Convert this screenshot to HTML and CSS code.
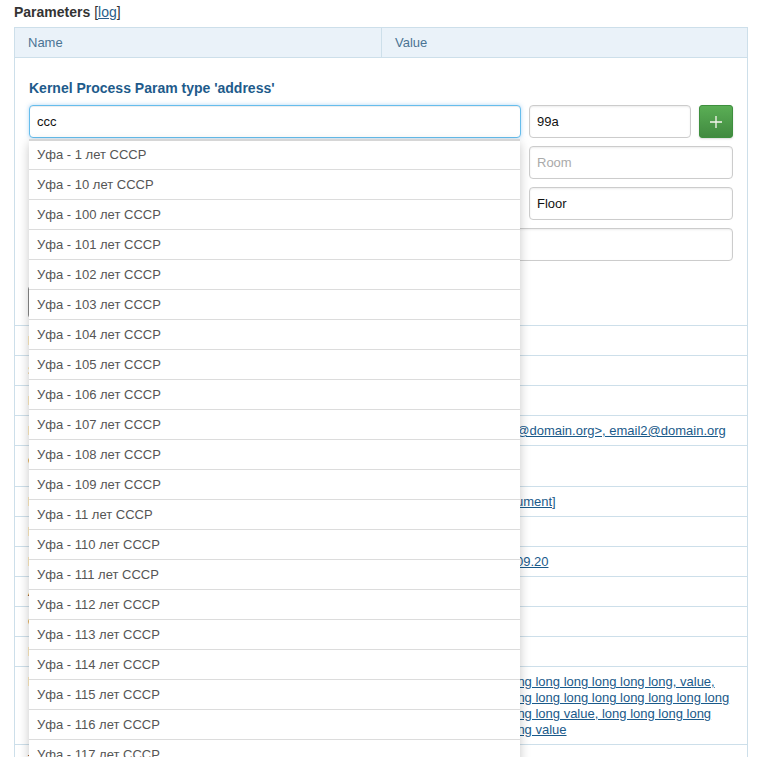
FILE: index.html
```html
<!DOCTYPE html>
<html lang="ru">
<head>
<meta charset="utf-8">
<title>Parameters</title>
<link rel="stylesheet" href="styles.css">
</head>
<body>
<div class="page">
  <div class="section-title">Parameters <span class="log">[<a href="#">log</a>]</span></div>

  <table class="params">
    <thead>
      <tr><th class="col-name">Name</th><th class="col-value">Value</th></tr>
    </thead>
    <tbody>
      <tr class="edit-row">
        <td colspan="2">
          <div class="edit-title">Kernel Process Param type 'address'</div>
          <div class="addr-form">
            <div class="combo">
              <input class="field focused" type="text" value="ccc">
              <ul class="suggest">
                <li>Уфа - 1 лет СССР</li>
                <li>Уфа - 10 лет СССР</li>
                <li>Уфа - 100 лет СССР</li>
                <li>Уфа - 101 лет СССР</li>
                <li>Уфа - 102 лет СССР</li>
                <li>Уфа - 103 лет СССР</li>
                <li>Уфа - 104 лет СССР</li>
                <li>Уфа - 105 лет СССР</li>
                <li>Уфа - 106 лет СССР</li>
                <li>Уфа - 107 лет СССР</li>
                <li>Уфа - 108 лет СССР</li>
                <li>Уфа - 109 лет СССР</li>
                <li>Уфа - 11 лет СССР</li>
                <li>Уфа - 110 лет СССР</li>
                <li>Уфа - 111 лет СССР</li>
                <li>Уфа - 112 лет СССР</li>
                <li>Уфа - 113 лет СССР</li>
                <li>Уфа - 114 лет СССР</li>
                <li>Уфа - 115 лет СССР</li>
                <li>Уфа - 116 лет СССР</li>
                <li>Уфа - 117 лет СССР</li>
              </ul>
            </div>
            <input class="field" type="text" value="99a">
            <button class="btn-add" type="button" aria-label="Add">
              <svg width="14" height="14" viewBox="0 0 14 14"><path d="M7 1V13M1 7H13" stroke="#f6f6ee" stroke-width="1.3" fill="none"/></svg>
            </button>
            <input class="field span-right" type="text" placeholder="Room">
            <input class="field span-right" type="text" value="Floor">
            <input class="field span-all" type="text">
          </div>
          <div class="form-actions">
            <button class="btn-save" type="button">Save</button>
          </div>
        </td>
      </tr>
      <tr><td>Process type</td><td><a href="#">Support</a></td></tr>
      <tr><td>Status</td><td><a href="#">Open</a></td></tr>
      <tr><td>Priority</td><td><a href="#">Normal</a></td></tr>
      <tr><td>E-mails</td><td class="nowrap"><a href="#">Ivan Petrovs &lt;email1@domain.org&gt;, email2@domain.org</a></td></tr>
      <tr class="tall"><td>Contact person</td><td><a href="#">Petrov I.</a></td></tr>
      <tr><td>Files</td><td><a href="#">[contract_12.pdf, document]</a></td></tr>
      <tr><td>Phone</td><td><a href="#">+7 347 000-00-00</a></td></tr>
      <tr><td>Deadline</td><td><a href="#">Updated 01.09.2019 09.20</a></td></tr>
      <tr><td>Amount</td><td><a href="#">1000</a></td></tr>
      <tr><td>Count</td><td><a href="#">12</a></td></tr>
      <tr><td>Flag</td><td><a href="#">yes</a></td></tr>
      <tr><td>List</td><td><a href="#">long long long long long long long long long long, value, long long long long long long long long long long long long long long long long long long value, long long long long long long long long long value</a></td></tr>
      <tr><td>Text</td><td><a href="#">text</a></td></tr>
    </tbody>
  </table>
</div>
</body>
</html>
```

FILE: styles.css
```css
html, body {
  margin: 0;
  padding: 0;
  background: #fff;
}

.page {
  padding: 2px 12px 0 14px;
  font-family: "Liberation Sans", Arial, sans-serif;
  font-size: 13px;
  color: #333;
  height: 757px;
  overflow: hidden;
}

.section-title {
  font-size: 14px;
  font-weight: bold;
  line-height: 20px;
  margin-bottom: 5px;
}

.section-title .log {
  font-weight: normal;
}

.section-title a {
  color: #2a5f8a;
}

/* parameter table */
.params {
  width: 100%;
  border-collapse: collapse;
  border: 1px solid #cddfea;
}

.params th {
  background: #eaf2f9;
  color: #4a7494;
  font-weight: normal;
  text-align: left;
  height: 29px;
  padding: 0 13px;
  border-bottom: 1px solid #cddfea;
}

.params th.col-name {
  width: 340px;
  border-right: 1px solid #cddfea;
}

.params td {
  padding: 7px 13px 6px;
  line-height: 16px;
  border-bottom: 1px solid #cddfea;
  vertical-align: top;
}

.params td.nowrap {
  white-space: nowrap;
}

.params td a {
  color: #1a5a8a;
}

.params tr.tall td {
  height: 27px;
}

/* address editor */
.params .edit-row td {
  padding: 20px 14px 7px;
}

.edit-title {
  font-size: 14px;
  font-weight: bold;
  color: #1e5b8b;
  line-height: 20px;
  margin-bottom: 7px;
}

.addr-form {
  display: grid;
  grid-template-columns: 492px 162px 34px;
  column-gap: 8px;
  row-gap: 8px;
}

.field {
  box-sizing: border-box;
  height: 33px;
  width: 100%;
  padding: 0 7px;
  border: 1px solid #ccc;
  border-radius: 4px;
  font-family: "Liberation Sans", Arial, sans-serif;
  font-size: 13px;
  color: #111;
  background: #fff;
  box-shadow: inset 0 1px 2px rgba(0, 0, 0, 0.075);
  outline: none;
}

.field::placeholder {
  color: #aaa;
}

.field.focused {
  border-color: #66bdec;
  box-shadow: inset 0 1px 1px rgba(0, 0, 0, 0.075), 0 0 4px rgba(102, 175, 233, 0.5);
}

.span-right {
  grid-column: 2 / 4;
}

.span-all {
  grid-column: 1 / 4;
}

.combo {
  position: relative;
}

.btn-add {
  height: 33px;
  width: 34px;
  padding: 0;
  border: 1px solid #3e8f3e;
  border-radius: 3px;
  background: linear-gradient(#5aae55, #418a40);
  box-shadow: 0 1px 2px rgba(0, 0, 0, 0.15);
  display: flex;
  align-items: center;
  justify-content: center;
}

.form-actions {
  margin-top: 25px;
}

.btn-save {
  height: 32px;
  margin-left: -1px;
  padding: 0 12px;
  border: 1px solid #8a8a8a;
  border-radius: 3px;
  background: #f4f4f4;
  font-family: "Liberation Sans", Arial, sans-serif;
  font-size: 13px;
}

/* suggestion list under the address input */
.suggest {
  position: absolute;
  top: 34px;
  left: 0;
  width: 491px;
  margin: 0;
  padding: 0;
  list-style: none;
  background: #fff;
  border-top: 2px solid #d6d6d6;
  box-shadow: 0 4px 10px rgba(0, 0, 0, 0.22);
  z-index: 10;
}

.suggest li {
  height: 29px;
  line-height: 29px;
  padding: 0 8px;
  color: #555;
  border-bottom: 1px solid #dcdcdc;
  white-space: nowrap;
}

.suggest li:first-child {
  height: 28px;
  line-height: 28px;
}
```
